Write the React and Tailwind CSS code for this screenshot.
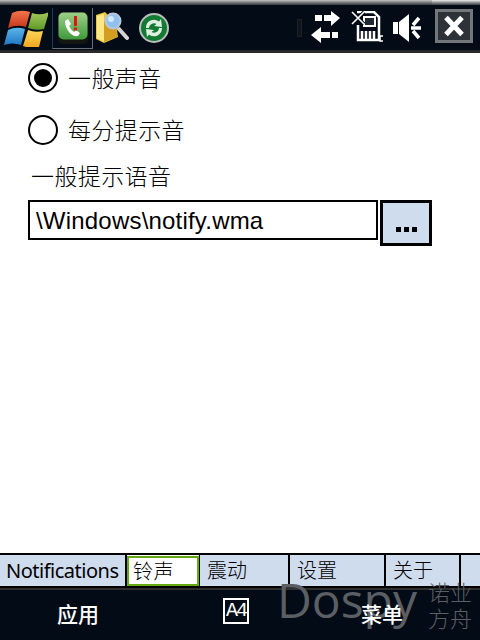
const SANS = { fontFamily: '"Noto Sans","Noto Sans CJK SC",sans-serif' };

function WinLogo() {
  return (
    <svg width="44" height="38" viewBox="0 0 44 38" className="block">
      <defs>
        <linearGradient id="wr" x1="0" y1="0" x2="0" y2="1"><stop offset="0" stopColor="#f4754a" /><stop offset="1" stopColor="#c8341c" /></linearGradient>
        <linearGradient id="wg" x1="0" y1="0" x2="0" y2="1"><stop offset="0" stopColor="#a5c95a" /><stop offset="1" stopColor="#5f9a2a" /></linearGradient>
        <linearGradient id="wb" x1="0" y1="0" x2="0" y2="1"><stop offset="0" stopColor="#5db4e8" /><stop offset="1" stopColor="#1f78c4" /></linearGradient>
        <linearGradient id="wy" x1="0" y1="0" x2="0" y2="1"><stop offset="0" stopColor="#fbd65a" /><stop offset="1" stopColor="#f2a51e" /></linearGradient>
      </defs>
      <path d="M8 4 Q16 0 26 3 L22 18 Q13 15 4 19 Z" fill="url(#wr)" />
      <path d="M28 4 Q36 7 45 3 L40 20 Q32 22 24 19 Z" fill="url(#wg)" />
      <path d="M4 21 Q12 17 21 20 L17 36 Q8 33 0 36 Z" fill="url(#wb)" />
      <path d="M24 21 Q31 24 39 22 L35 38 Q27 40 19 37 Z" fill="url(#wy)" />
    </svg>
  );
}

function PhoneIcon() {
  return (
    <svg width="30" height="32" viewBox="0 0 30 32" className="block">
      <defs>
        <linearGradient id="pg" x1="0" y1="0" x2="0" y2="1"><stop offset="0" stopColor="#9ed088" /><stop offset="1" stopColor="#3f9a3c" /></linearGradient>
      </defs>
      <rect x="0" y="0" width="30" height="32" rx="5" fill="#14170f" />
      <rect x="0.5" y="0.5" width="29" height="27" rx="5" fill="url(#pg)" />
      <path d="M7 9 L10 7 L13 12 L11 14 Q13 18 16 20 L18 18 L22 21 L20 24 Q15 25 11 20 Q7 15 7 9 Z" fill="#fff" />
      <rect x="16" y="4" width="3" height="10" fill="#e01414" />
      <rect x="16" y="15.5" width="3" height="3" fill="#e01414" />
    </svg>
  );
}

function FolderIcon() {
  return (
    <svg width="33" height="33" viewBox="0 0 33 33" className="block">
      <path d="M0 4 L9 1 L12 4 L19 6 L22 26 L8 32 L0 28 Z" fill="#e6c63c" />
      <path d="M1 5 L8 3 L8 31 L1 27 Z" fill="#fbe884" />
      <path d="M8 10 L20 12 L21 26 L8 31 Z" fill="#d39d22" />
      <line x1="23" y1="18" x2="31" y2="27" stroke="#d4d4d4" strokeWidth="4" strokeLinecap="round" />
      <circle cx="17" cy="10" r="7.5" fill="#8fc0ee" stroke="#b7c7dc" strokeWidth="2" />
      <circle cx="15" cy="8" r="3" fill="#d3e8fb" />
    </svg>
  );
}

function SyncIcon() {
  return (
    <svg width="30" height="30" viewBox="0 0 30 30" className="block">
      <circle cx="15" cy="15" r="14" fill="#137a33" stroke="#b9bfbb" strokeWidth="2" />
      <path d="M7 15 A8 8 0 0 1 20 8.5 L22 6 L23 14 L15 13 L17.5 11 A5 5 0 0 0 10 15 Z" fill="#dff0e0" />
      <path d="M23 15 A8 8 0 0 1 10 21.5 L8 24 L7 16 L15 17 L12.5 19 A5 5 0 0 0 20 15 Z" fill="#dff0e0" />
    </svg>
  );
}

function ArrowsIcon() {
  return (
    <svg width="31" height="34" viewBox="0 0 31 34" className="block" fill="#fff">
      <path d="M5 5 H12 V11 H5 Z M14 5 H21 V1 L30 8 L21 16 V11 H14 Z" />
      <path d="M1 25 L11 17 V22 H20 V28 H11 V33 Z M22 22 H28 V28 H22 Z" />
    </svg>
  );
}

function SdIcon() {
  return (
    <svg width="33" height="33" viewBox="0 0 33 33" className="block" fill="none">
      <path d="M6 1 H23 L28 6 V29 H7 V14" stroke="#fff" strokeWidth="2.5" />
      <path d="M13 6 H24 V15 H13 Z" fill="#fff" fillOpacity="0.12" stroke="#fff" strokeWidth="2" />
      <path d="M11 20 V28 M15 20 V28 M19 20 V28 M23 20 V28" stroke="#fff" strokeWidth="2.5" />
      <path d="M1 1 L13 13 M13 1 L1 13" stroke="#020b16" strokeWidth="3.5" />
      <path d="M1 1 L13 13 M13 1 L1 13" stroke="#fff" strokeWidth="1.6" />
      <path d="M32 25 H29 V30 H32" stroke="#fff" strokeWidth="1.5" />
    </svg>
  );
}

function MuteIcon() {
  return (
    <svg width="30" height="30" viewBox="0 0 30 30" className="block">
      <path d="M0 9 H5 V21 H0 Z M6 9 L16 1 V29 L6 21 Z" fill="#fff" />
      <path d="M20 12 L26 5 M18 15 H28 M20 18 L26 25" stroke="#fff" strokeWidth="3.5" />
    </svg>
  );
}

function CloseBox() {
  return (
    <div className="w-[38px] h-[34px] border-[3px] border-[#73777a] bg-[#2c3238] flex items-center justify-center">
      <svg width="22" height="22" viewBox="0 0 22 22">
        <path d="M3 2.5 L19 19.5 M19 2.5 L3 19.5" stroke="#fff" strokeWidth="5" />
      </svg>
    </div>
  );
}

function Radio({ on }) {
  return (
    <span className="w-[30px] h-[30px] rounded-full border-2 border-black bg-white flex items-center justify-center shrink-0">
      {on && <span className="w-[18px] h-[18px] rounded-full bg-black" />}
    </span>
  );
}

function Tab({ w, children, active, last }) {
  if (active) {
    return (
      <div className={`${w} h-[30px] mt-[1px] border-2 border-[#66a80f] bg-white flex items-center pl-[4px] pt-[1px] text-[20px] tracking-[0.4px] text-black font-light`}>
        {children}
      </div>
    );
  }
  return (
    <div className={`${w} h-[31px] bg-[#cfdcee] flex items-center pl-[7px] pt-[1px] text-[20px] text-black font-light ${last ? '' : 'border-r-2 border-black'}`}>
      {children}
    </div>
  );
}

export default function App() {
  return (
    <div className="relative w-[480px] h-[640px] overflow-hidden bg-white flex flex-col" style={SANS}>
      <header className="h-[53px] shrink-0 flex flex-col bg-[#020b16]">
        <div className="flex h-[5px] shrink-0">
          <div className="flex-1 bg-gradient-to-b from-[#c4c4c4] to-[#33383d]" />
          <div className="w-[48px] bg-gradient-to-b from-[#eeeeee] to-[#3a3f44]" />
        </div>
        <div className="flex-1 flex items-center pl-[4px]">
          <WinLogo />
          <div className="ml-[4px] w-[41px] h-[41px] mt-[1px] border-l border-l-[#1d3a5c] border-r border-r-[#6a7076] border-b border-b-[#6a7076] flex items-center justify-center">
            <PhoneIcon />
          </div>
          <div className="ml-[3px]"><FolderIcon /></div>
          <div className="ml-[10px]"><SyncIcon /></div>
          <div className="ml-[128px] w-[5px] h-[18px] bg-[#0f151c] border border-[#1a2128]" />
          <div className="ml-[8px] mb-[1px]"><ArrowsIcon /></div>
          <div className="ml-[10px]"><SdIcon /></div>
          <div className="ml-[9px]"><MuteIcon /></div>
          <div className="ml-[12px] mb-[3px]"><CloseBox /></div>
        </div>
        <div className="h-[3px] shrink-0 bg-[#2a2a2a]" />
      </header>

      <main className="flex-1 flex flex-col pl-[28px] text-black text-[23px] tracking-[0.4px] font-light">
        <div className="mt-[10px] flex items-center gap-[10px] h-[30px]">
          <Radio on />
          <span className="pt-[1px]">一般声音</span>
        </div>
        <div className="mt-[22px] flex items-center gap-[10px] h-[30px]">
          <Radio />
          <span className="pt-[1px]">每分提示音</span>
        </div>
        <div className="mt-[14px] pl-[3px] h-[34px] leading-[34px]">一般提示语音</div>
        <div className="mt-[7px] flex items-start gap-[2px]">
          <div className="w-[350px] h-[40px] border-2 border-black flex items-center pl-[6px] pt-[2px] text-[24px] tracking-[0.2px]" style={{ fontFamily: '"Liberation Sans",sans-serif', fontWeight: 400 }}>
            \Windows\notify.wma
          </div>
          <div className="w-[52px] h-[46px] border-[3px] border-black bg-[#cfdcee] flex items-end justify-center pb-[11px] gap-[3px]">
            <span className="w-[5px] h-[5px] bg-black" />
            <span className="w-[5px] h-[5px] bg-black" />
            <span className="w-[5px] h-[5px] bg-black" />
          </div>
        </div>
      </main>

      <nav className="h-[35px] shrink-0 border-t-2 border-b-2 border-black flex bg-white">
        <Tab w="w-[127px]"><span className="tracking-[-0.5px] -ml-[1px] -mt-[1px] font-normal">Notifications</span></Tab>
        <Tab w="w-[72px]" active>铃声</Tab>
        <div className="w-px bg-black" />
        <Tab w="w-[90px]">震动</Tab>
        <Tab w="w-[96px]">设置</Tab>
        <Tab w="w-[75px]">关于</Tab>
        <Tab w="flex-1" last />
      </nav>

      <footer className="relative h-[52px] shrink-0 bg-[#020b16] border-t-2 border-[#2f2f2f] flex items-center text-white text-[21px] font-medium">
        <span className="ml-[57px]">应用</span>
        <span className="ml-[124px] mb-[9px] w-[26px] h-[26px] border-2 border-white flex items-center justify-center text-[20px] tracking-[-2px] font-normal leading-none" style={{ fontFamily: '"Liberation Mono",monospace' }}>A4</span>
        <span className="relative z-10 ml-[112px]">菜单</span>
      </footer>

      <div className="absolute left-[277px] top-[565px] text-[48px] leading-[70px] text-[#5b5f63] pointer-events-none" style={{ fontFamily: '"Open Sans",sans-serif', fontWeight: 400 }}>Dospy</div>
      <div className="absolute left-[428px] top-[579px] w-[46px] text-[22px] leading-[26px] text-[#5b5f63] font-light pointer-events-none">诺业<br />方舟</div>
    </div>
  );
}
